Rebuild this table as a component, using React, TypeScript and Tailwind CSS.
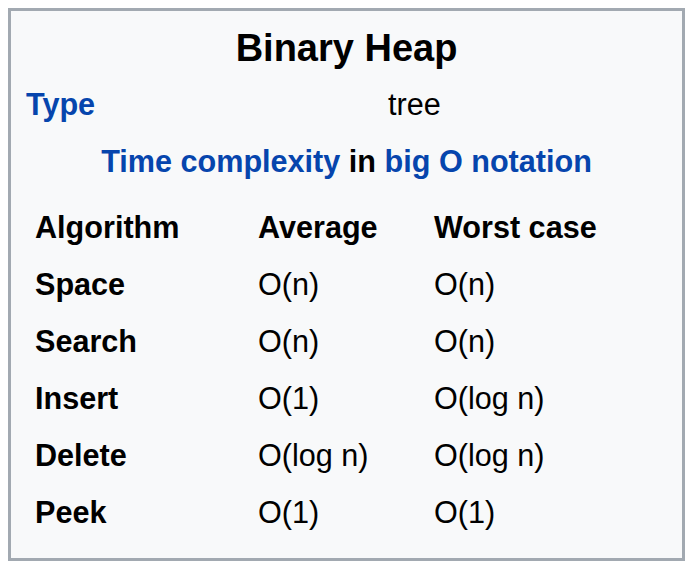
const rows: [string, string, string][] = [
  ['Space', 'O(n)', 'O(n)'],
  ['Search', 'O(n)', 'O(n)'],
  ['Insert', 'O(1)', 'O(log n)'],
  ['Delete', 'O(log n)', 'O(log n)'],
  ['Peek', 'O(1)', 'O(1)'],
]

const link = 'text-[#0645ad]'

export default function App() {
  return (
    <div className="w-[694px] h-[572px] bg-white pt-[8px] pl-[8px] font-['Liberation_Sans',Arial,sans-serif] text-black">
      <div className="w-[677px] h-[553px] border-[3px] border-[#a2a9b1] bg-[#f8f9fa] text-[30.6px] leading-none">
        <div className="h-[73px] flex items-center justify-center text-[38px] font-bold">
          Binary Heap
        </div>

        <div className="h-[40px] flex items-center">
          <div className={`w-[377px] pl-[15px] font-bold ${link}`}>Type</div>
          <div>tree</div>
        </div>

        <div className="h-[74px] flex items-center justify-center font-bold">
          <span className={link}>Time complexity</span>
          <span className="whitespace-pre"> in </span>
          <span className={link}>big O notation</span>
        </div>

        <div className="h-[58px] flex items-center font-bold">
          <div className="w-[247px] pl-[24px]">Algorithm</div>
          <div className="w-[176px]">Average</div>
          <div>Worst case</div>
        </div>

        {rows.map(([name, avg, worst]) => (
          <div key={name} className="h-[57px] flex items-center">
            <div className="w-[247px] pl-[24px] font-bold">{name}</div>
            <div className="w-[176px]">{avg}</div>
            <div>{worst}</div>
          </div>
        ))}
      </div>
    </div>
  )
}
